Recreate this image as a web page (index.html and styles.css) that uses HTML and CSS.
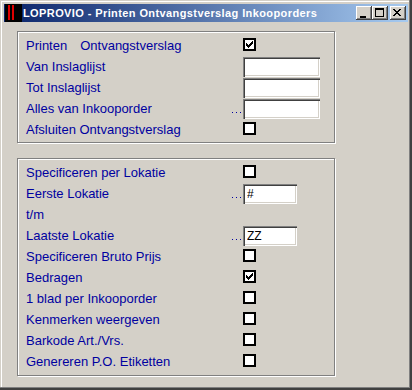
FILE: index.html
```html
<!DOCTYPE html>
<html lang="nl">
  <head>
    <meta charset="UTF-8" />
    <meta name="viewport" content="width=device-width, initial-scale=1.0" />
    <title>LOPROVIO - Printen Ontvangstverslag Inkooporders</title>
    <link rel="stylesheet" href="styles.css">
  </head>
  <body>
    <div class="window">
      <div class="titlebar">
        <span class="app-icon"><i></i><i></i></span>
        <span class="title">LOPROVIO - Printen Ontvangstverslag Inkooporders</span>
        <div class="caption-buttons">
          <span class="cap-btn">
            <svg width="16" height="14" viewBox="0 0 16 14" shape-rendering="crispEdges"><path d="M4 10h6v2H4z" fill="#000"/></svg>
          </span>
          <span class="cap-btn">
            <svg width="16" height="14" viewBox="0 0 16 14" shape-rendering="crispEdges"><path d="M3 2h9v9H3z M4 4v6h7V4z" fill="#000" fill-rule="evenodd"/></svg>
          </span>
          <span class="cap-btn close">
            <svg width="16" height="14" viewBox="0 0 16 14" shape-rendering="crispEdges"><path d="M3 3h2v1H3z M9 3h2v1H9z M4 4h2v1H4z M8 4h2v1H8z M5 5h4v1H5z M6 6h2v1H6z M5 7h4v1H5z M4 8h2v1H4z M8 8h2v1H8z M3 9h2v1H3z M9 9h2v1H9z" fill="#000"/></svg>
          </span>
        </div>
      </div>

      <div class="group group-print">
        <div class="row">
          <span class="label">Printen<span class="spacer"></span>Ontvangstverslag</span>
          <span></span>
          <span class="check checked"><svg width="7" height="7" viewBox="0 0 7 7" shape-rendering="crispEdges"><path d="M0 2h1v3H0z M1 3h1v3H1z M2 4h1v3H2z M3 3h1v3H3z M4 2h1v3H4z M5 1h1v3H5z M6 0h1v3H6z" fill="#000"/></svg></span>
        </div>
        <div class="row">
          <span class="label">Van Inslaglijst</span>
          <span></span>
          <input class="field wide" type="text" value="" readonly>
        </div>
        <div class="row">
          <span class="label">Tot Inslaglijst</span>
          <span></span>
          <input class="field wide" type="text" value="" readonly>
        </div>
        <div class="row">
          <span class="label">Alles van Inkooporder</span>
          <span class="lead"></span>
          <input class="field wide" type="text" value="" readonly>
        </div>
        <div class="row">
          <span class="label">Afsluiten Ontvangstverslag</span>
          <span></span>
          <span class="check"></span>
        </div>
      </div>

      <div class="group group-options">
        <div class="row">
          <span class="label">Specificeren per Lokatie</span>
          <span></span>
          <span class="check"></span>
        </div>
        <div class="row">
          <span class="label">Eerste Lokatie</span>
          <span class="lead"></span>
          <input class="field narrow" type="text" value="#" readonly>
        </div>
        <div class="row">
          <span class="label">t/m</span>
        </div>
        <div class="row">
          <span class="label">Laatste Lokatie</span>
          <span class="lead"></span>
          <input class="field narrow" type="text" value="ZZ" readonly>
        </div>
        <div class="row">
          <span class="label">Specificeren Bruto Prijs</span>
          <span></span>
          <span class="check"></span>
        </div>
        <div class="row">
          <span class="label">Bedragen</span>
          <span></span>
          <span class="check checked"><svg width="7" height="7" viewBox="0 0 7 7" shape-rendering="crispEdges"><path d="M0 2h1v3H0z M1 3h1v3H1z M2 4h1v3H2z M3 3h1v3H3z M4 2h1v3H4z M5 1h1v3H5z M6 0h1v3H6z" fill="#000"/></svg></span>
        </div>
        <div class="row">
          <span class="label">1 blad per Inkooporder</span>
          <span></span>
          <span class="check"></span>
        </div>
        <div class="row">
          <span class="label">Kenmerken weergeven</span>
          <span></span>
          <span class="check"></span>
        </div>
        <div class="row">
          <span class="label">Barkode Art./Vrs.</span>
          <span></span>
          <span class="check"></span>
        </div>
        <div class="row">
          <span class="label">Genereren P.O. Etiketten</span>
          <span></span>
          <span class="check"></span>
        </div>
      </div>
    </div>
  </body>
</html>
```

FILE: styles.css
```css
* {
  box-sizing: border-box;
}
html,
body {
  margin: 0;
  overflow: hidden;
}
body {
  background: #d4d0c8;
  font-family: "Liberation Sans", Arial, sans-serif;
}
.window {
  width: 412px;
  height: 390px;
  padding: 4px;
  background: #d4d0c8;
  box-shadow: inset -2px -2px 0 #404040, inset -3px -3px 0 #808080,
    inset 1px 1px 0 #d4d0c8, inset 2px 2px 0 #fff;
}

/* title bar */
.titlebar {
  display: flex;
  align-items: center;
  height: 18px;
  padding-right: 2px;
  background: linear-gradient(to right, #0a246a, #a6caf0);
}
.app-icon {
  display: flex;
  gap: 2px;
  width: 17px;
  height: 18px;
  margin-left: 1px;
  padding: 1px 0 0 3px;
  background: #000;
}
.app-icon i {
  width: 2px;
  height: 15px;
  background: #e00000;
}
.title {
  margin-left: 1px;
  color: #fff;
  font-weight: bold;
  font-size: 11px;
  line-height: 18px;
  letter-spacing: 0.4px;
  white-space: nowrap;
}
.caption-buttons {
  display: flex;
  margin-left: auto;
}
.cap-btn {
  display: block;
  width: 16px;
  height: 14px;
  background: #d4d0c8;
  box-shadow: inset -1px -1px 0 #404040, inset 1px 1px 0 #fff,
    inset -2px -2px 0 #808080, inset 2px 2px 0 #d4d0c8;
}
.cap-btn svg {
  display: block;
}
.cap-btn.close {
  margin-left: 2px;
}

/* group boxes */
.group {
  width: 318px;
  margin-left: 13px;
  padding-left: 8px;
  border: 1px solid #808080;
  box-shadow: inset 1px 1px 0 #fff, 1px 1px 0 #fff;
}
.group-print {
  height: 112px;
  margin-top: 9px;
  padding-top: 3px;
}
.group-options {
  height: 218px;
  margin-top: 15px;
  padding-top: 3px;
}
.row {
  display: grid;
  grid-template-columns: 206px 11px auto;
  align-items: center;
  height: 21px;
}
.label {
  color: #0000a0;
  font-size: 13px;
  white-space: nowrap;
}
.spacer {
  display: inline-block;
  width: 13px;
}
.lead {
  align-self: end;
  width: 9px;
  height: 1px;
  margin-bottom: 6px;
  background-image: linear-gradient(to right, #0000a0 1px, transparent 1px);
  background-size: 4px 1px;
}

/* controls */
.check {
  display: block;
  width: 13px;
  height: 13px;
  margin-bottom: 2px;
  padding: 1px;
  border: 2px solid #000;
  background: #fff;
}
.check svg {
  display: block;
}
.field {
  display: block;
  height: 20px;
  margin: 0;
  padding: 0 0 0 5px;
  border: none;
  outline: none;
  background: #fff;
  color: #000;
  font-family: "Liberation Sans", Arial, sans-serif;
  font-size: 12px;
  box-shadow: inset 1px 1px 0 #808080, inset 2px 2px 0 #404040,
    inset -1px -1px 0 #fff, inset -2px -2px 0 #d4d0c8;
}
.field.wide {
  width: 77px;
}
.field.narrow {
  width: 54px;
  padding-left: 4px;
}
```
